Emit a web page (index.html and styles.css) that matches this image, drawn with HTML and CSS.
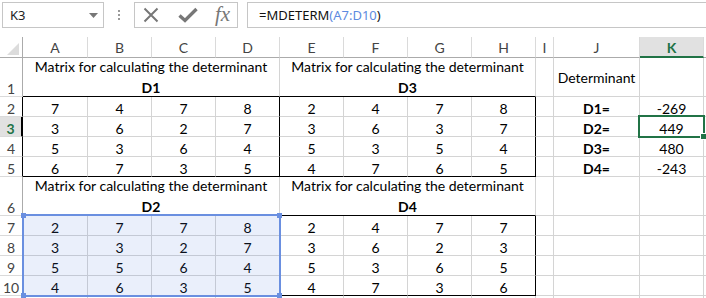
FILE: index.html
```html
<!DOCTYPE html>
<html lang="en">
<head>
<meta charset="UTF-8">
<meta name="viewport" content="width=device-width, initial-scale=1.0">
<title>MDETERM</title>
<link rel="stylesheet" href="styles.css">
</head>
<body>

<div class="formula-bar">
  <div class="name-box">
    <span>K3</span>
    <svg width="9" height="5" viewBox="0 0 9 5"><polygon points="0,0 9,0 4.5,5" fill="#777"/></svg>
  </div>
  <div class="grip"><i></i><i></i><i></i></div>
  <div class="fx-box">
    <svg class="icon-cancel" width="16" height="16" viewBox="0 0 16 16"><path d="M1.5 1.5 L14.5 14.5 M14.5 1.5 L1.5 14.5" stroke="#777" stroke-width="2" fill="none"/></svg>
    <svg class="icon-enter" width="20" height="16" viewBox="0 0 20 16"><path d="M1.5 8.5 L7 13.5 L18.5 2" stroke="#777" stroke-width="3.4" fill="none"/></svg>
    <span class="fx">fx</span>
  </div>
  <div class="formula-input">=MDETERM<span class="ref">(A7:D10</span>)</div>
</div>

<div class="sheet">
  <!-- column headers -->
  <div class="corner"><svg width="12" height="12" viewBox="0 0 12 12"><polygon points="12,0 12,12 0,12" fill="#dcdcdc"/></svg></div>
  <div class="ch">A</div>
  <div class="ch">B</div>
  <div class="ch">C</div>
  <div class="ch">D</div>
  <div class="ch">E</div>
  <div class="ch">F</div>
  <div class="ch">G</div>
  <div class="ch">H</div>
  <div class="ch">I</div>
  <div class="ch">J</div>
  <div class="ch ch-active">K</div>
  <div class="ch end"></div>

  <!-- row 1 -->
  <div class="rh">1</div>
  <div class="c title b"><span>Matrix for calculating the determinant</span><strong>D1</strong></div>
  <div class="c title b"><span>Matrix for calculating the determinant</span><strong>D3</strong></div>
  <div class="c"></div>
  <div class="c mid">Determinant</div>
  <div class="c"></div>
  <div class="c end"></div>

  <!-- row 2 -->
  <div class="rh edge">2</div>
  <div class="c">7</div><div class="c">4</div><div class="c">7</div><div class="c r">8</div>
  <div class="c">2</div><div class="c">4</div><div class="c">7</div><div class="c r">8</div>
  <div class="c"></div>
  <div class="c bold">D1=</div>
  <div class="c">-269</div>
  <div class="c end"></div>

  <!-- row 3 -->
  <div class="rh edge rh-active">3</div>
  <div class="c">3</div><div class="c">6</div><div class="c">2</div><div class="c r">7</div>
  <div class="c">3</div><div class="c">6</div><div class="c">3</div><div class="c r">7</div>
  <div class="c"></div>
  <div class="c bold">D2=</div>
  <div class="c">449</div>
  <div class="c end"></div>

  <!-- row 4 -->
  <div class="rh edge">4</div>
  <div class="c">5</div><div class="c">3</div><div class="c">6</div><div class="c r">4</div>
  <div class="c">5</div><div class="c">3</div><div class="c">5</div><div class="c r">4</div>
  <div class="c"></div>
  <div class="c bold">D3=</div>
  <div class="c">480</div>
  <div class="c end"></div>

  <!-- row 5 -->
  <div class="rh edge">5</div>
  <div class="c b">6</div><div class="c b">7</div><div class="c b">3</div><div class="c b r">5</div>
  <div class="c b">4</div><div class="c b">7</div><div class="c b">6</div><div class="c b r">5</div>
  <div class="c"></div>
  <div class="c bold">D4=</div>
  <div class="c">-243</div>
  <div class="c end"></div>

  <!-- row 6 -->
  <div class="rh">6</div>
  <div class="c title b"><span>Matrix for calculating the determinant</span><strong>D2</strong></div>
  <div class="c title b"><span>Matrix for calculating the determinant</span><strong>D4</strong></div>
  <div class="c"></div>
  <div class="c"></div>
  <div class="c"></div>
  <div class="c end"></div>

  <!-- row 7 -->
  <div class="rh">7</div>
  <div class="c">2</div><div class="c">7</div><div class="c">7</div><div class="c r">8</div>
  <div class="c">2</div><div class="c">4</div><div class="c">7</div><div class="c r">7</div>
  <div class="c"></div><div class="c"></div><div class="c"></div><div class="c end"></div>

  <!-- row 8 -->
  <div class="rh">8</div>
  <div class="c">3</div><div class="c">3</div><div class="c">2</div><div class="c r">7</div>
  <div class="c">3</div><div class="c">6</div><div class="c">2</div><div class="c r">3</div>
  <div class="c"></div><div class="c"></div><div class="c"></div><div class="c end"></div>

  <!-- row 9 -->
  <div class="rh">9</div>
  <div class="c">5</div><div class="c">5</div><div class="c">6</div><div class="c r">4</div>
  <div class="c">5</div><div class="c">3</div><div class="c">6</div><div class="c r">5</div>
  <div class="c"></div><div class="c"></div><div class="c"></div><div class="c end"></div>

  <!-- row 10 -->
  <div class="rh">10</div>
  <div class="c b">4</div><div class="c b">6</div><div class="c b">3</div><div class="c b r">5</div>
  <div class="c b">4</div><div class="c b">7</div><div class="c b">3</div><div class="c b r">6</div>
  <div class="c"></div><div class="c"></div><div class="c"></div><div class="c end"></div>

  <!-- row 11, cut off by the window -->
  <div class="rh"></div>
  <div class="c"></div><div class="c"></div><div class="c"></div><div class="c"></div>
  <div class="c"></div><div class="c"></div><div class="c"></div><div class="c"></div>
  <div class="c"></div><div class="c"></div><div class="c"></div><div class="c end"></div>

  <!-- formula reference highlight A7:D10 -->
  <div class="range-ref">
    <span class="handle tl"></span>
    <span class="handle tr"></span>
    <span class="handle bl"></span>
    <span class="handle br"></span>
  </div>

  <!-- active cell K3 -->
  <div class="active-cell"><span class="fill-handle"></span></div>
</div>

</body>
</html>
```

FILE: styles.css
```css
html, body {
  margin: 0;
  padding: 0;
  overflow: hidden;
  background-color: #fff;
}

body {
  font-family: Lato, "Liberation Sans", sans-serif;
  color: #000;
}

/* Formula bar */
.formula-bar {
  display: flex;
  align-items: center;
  height: 30px;
  padding-left: 2px;
}

.name-box {
  box-sizing: border-box;
  width: 102px;
  height: 26px;
  border: 1px solid #c6c6c6;
  display: flex;
  align-items: center;
  justify-content: space-between;
  padding: 0 5px 0 7px;
  font-family: "Noto Sans", sans-serif;
  font-size: 13px;
  color: #222;
}

.grip {
  width: 30px;
  display: flex;
  flex-direction: column;
  align-items: center;
  gap: 2px;
}

.grip i {
  width: 2px;
  height: 2px;
  background-color: #9a9a9a;
}

.fx-box {
  box-sizing: border-box;
  width: 104px;
  height: 26px;
  border: 1px solid #c6c6c6;
  display: flex;
  align-items: center;
}

.icon-cancel {
  margin-left: 8px;
}

.icon-enter {
  margin-left: 19px;
}

.fx {
  margin-left: 17px;
  font-family: "Liberation Serif", serif;
  font-style: italic;
  font-size: 21px;
  color: #777;
  line-height: 1;
  margin-top: -2px;
}

.formula-input {
  box-sizing: border-box;
  flex: 1;
  height: 26px;
  margin-left: 9px;
  margin-right: -4px;
  border: 1px solid #c6c6c6;
  padding-left: 11px;
  display: flex;
  align-items: center;
  font-family: "Noto Sans", sans-serif;
  font-size: 13px;
  color: #111;
}

.formula-input .ref {
  color: #5d8ae0;
}

/* Sheet grid */
.sheet {
  position: relative;
  margin-top: 7px;
  display: grid;
  grid-template-columns: 23px 65px repeat(7, 64px) 18px 86px 64px 1fr;
  grid-template-rows: 21px 39px repeat(4, 20px) 39px repeat(4, 20px) 20px;
  font-size: 14px;
}

.corner, .ch, .rh, .c {
  box-sizing: border-box;
  display: flex;
  justify-content: center;
  border-right: 1px solid #d4d4d4;
  border-bottom: 1px solid #d4d4d4;
}

.corner {
  align-items: flex-end;
  justify-content: flex-end;
  padding: 0 3px 2px 0;
  border-right-color: #ababab;
  border-bottom-color: #ababab;
}

.ch {
  align-items: center;
  color: #444;
  border-right-color: #dadada;
  border-bottom-color: #ababab;
}

.ch-active {
  background-color: #e1e1e1;
  color: #217346;
  font-weight: bold;
  border-bottom: 2px solid #217346;
  padding-top: 1px;
}

.rh {
  align-items: flex-end;
  line-height: 15px;
  color: #444;
  border-right-color: #ababab;
  border-bottom-color: #dadada;
}

.rh.edge {
  border-right-color: #000;
}

.rh-active {
  background-color: #e1e1e1;
  color: #217346;
  font-weight: bold;
  border-right: 2px solid #217346;
}

.c {
  align-items: flex-end;
  line-height: 15px;
}

.end {
  border-right: none;
}

.c.b {
  border-bottom-color: #000;
}

.c.r {
  border-right-color: #000;
}

.c.bold {
  font-weight: bold;
}

.c.mid {
  align-items: center;
}

.title {
  grid-column: span 4;
  flex-direction: column;
  align-items: center;
  justify-content: center;
  line-height: 21px;
  white-space: nowrap;
}

/* Reference highlight for A7:D10 */
.range-ref {
  position: absolute;
  left: 22px;
  top: 177px;
  width: 259px;
  height: 83px;
  box-sizing: border-box;
  border: 2px solid #6a8fe0;
  background-color: rgba(91, 135, 224, 0.13);
}

.handle {
  position: absolute;
  width: 5px;
  height: 5px;
  background-color: #6a8fe0;
}

.handle.tl { left: -3px; top: -3px; }
.handle.tr { right: -3px; top: -3px; }
.handle.bl { left: -3px; bottom: -3px; }
.handle.br { right: -3px; bottom: -3px; }

/* Active cell K3 */
.active-cell {
  position: absolute;
  left: 638px;
  top: 78px;
  width: 67px;
  height: 23px;
  box-sizing: border-box;
  border: 2px solid #217346;
}

.fill-handle {
  position: absolute;
  right: -4px;
  bottom: -4px;
  width: 5px;
  height: 5px;
  background-color: #217346;
  border: 1px solid #fff;
}
```
